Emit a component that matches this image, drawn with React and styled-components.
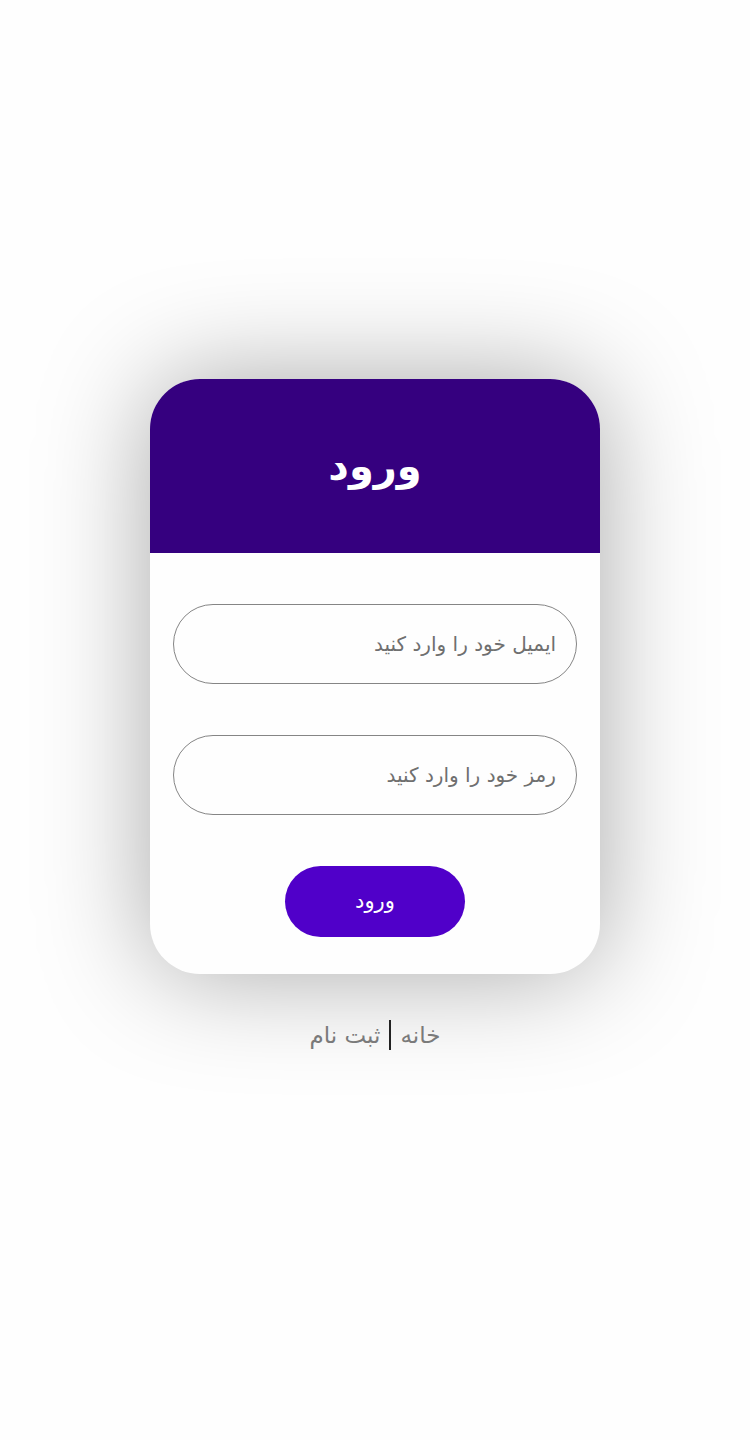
import React from "react";
import styled, { createGlobalStyle } from "styled-components";

const Global = createGlobalStyle`
  html, body { margin: 0; padding: 0; background: #fefefe; }
  body { font-family: "DejaVu Sans", "Noto Sans", sans-serif; }
  * { box-sizing: border-box; }
`;

const Page = styled.main`
  min-height: 100vh;
  display: flex;
  flex-direction: column;
  align-items: center;
  justify-content: center;
  padding-bottom: 12px;
  direction: rtl;
`;

const Card = styled.section`
  width: 450px;
  border-radius: 50px;
  background: #fefefe;
  overflow: hidden;
  box-shadow: 0 0 110px rgba(0, 0, 0, 0.34);
`;

const Header = styled.header`
  height: 174px;
  background: #35007f;
  display: flex;
  align-items: center;
  justify-content: center;
`;

const Title = styled.h1`
  margin: 0;
  color: #ffffff;
  font-size: 40px;
  font-weight: 700;
`;

const Form = styled.form`
  display: flex;
  flex-direction: column;
  align-items: center;
  gap: 51px;
  padding: 51px 23px 37px;
`;

const Field = styled.input`
  width: 100%;
  height: 80px;
  border-radius: 40px;
  border: 1.5px solid #858585;
  background: #fefefe;
  padding: 0 20px;
  font-family: inherit;
  font-size: 20px;
  direction: rtl;
  outline: none;
  &::placeholder { color: #6f6f6f; }
`;

const Submit = styled.button`
  width: 180px;
  height: 71px;
  border: none;
  border-radius: 36px;
  background: #5000c9;
  color: #ffffff;
  font-family: inherit;
  font-size: 21px;
  cursor: pointer;
`;

const Links = styled.nav`
  margin-top: 46px;
  display: flex;
  align-items: center;
  gap: 9px;
  font-size: 23px;
  color: #7a7a7a;
`;

const Link = styled.a`
  color: #7a7a7a;
  text-decoration: none;
`;

const Sep = styled.span`
  width: 2px;
  height: 30px;
  background: #222;
`;

export default function App() {
  return (
    <>
      <Global />
      <Page>
        <Card>
          <Header>
            <Title>ورود</Title>
          </Header>
          <Form onSubmit={(e) => e.preventDefault()}>
            <Field type="email" placeholder="ایمیل خود را وارد کنید" />
            <Field type="password" placeholder="رمز خود را وارد کنید" />
            <Submit type="submit">ورود</Submit>
          </Form>
        </Card>
        <Links>
          <Link href="#">خانه</Link>
          <Sep />
          <Link href="#">ثبت نام</Link>
        </Links>
      </Page>
    </>
  );
}
